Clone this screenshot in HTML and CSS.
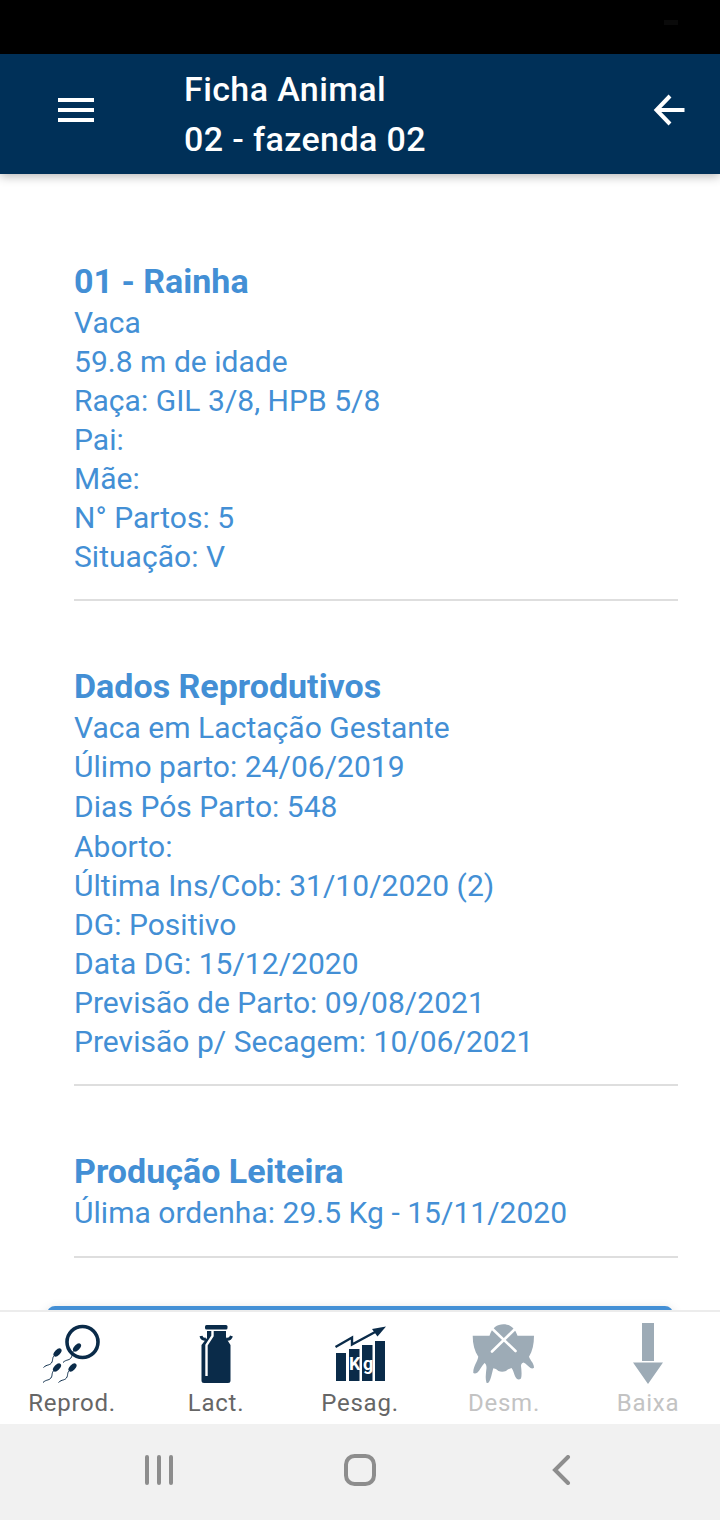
FILE: index.html
```
<!DOCTYPE html>
<html lang="pt-BR">
  <head>
    <title>Ficha Animal</title>
    <meta charset="UTF-8">
    <meta name="viewport" content="width=device-width, initial-scale=1.0">
    <link rel="stylesheet" href="styles.css">
  </head>
  <body>
    <div class="status-bar"><span class="camera"></span></div>

    <header class="toolbar">
      <svg class="menu" width="36" height="24" viewBox="0 0 36 24" fill="#fff">
        <rect width="36" height="4"/>
        <rect y="10" width="36" height="4"/>
        <rect y="20" width="36" height="4"/>
      </svg>
      <h1>Ficha Animal<br>02 - fazenda 02</h1>
      <svg class="back" width="32" height="32" viewBox="0 0 32 32" fill="none" stroke="#fff" stroke-width="4">
        <path d="M17 2 3.500 16 17 30"/>
        <path d="M4 16H31.500"/>
      </svg>
    </header>

    <main class="content">
      <section>
        <h2>01 - Rainha</h2>
        <p>Vaca</p>
        <p>59.8 m de idade</p>
        <p>Raça: GIL 3/8, HPB 5/8</p>
        <p>Pai:</p>
        <p>Mãe:</p>
        <p>N° Partos: 5</p>
        <p>Situação: V</p>
      </section>
      <section>
        <h2>Dados Reprodutivos</h2>
        <p>Vaca em Lactação Gestante</p>
        <p class="tall">Úlimo parto: 24/06/2019</p>
        <p class="tall">Dias Pós Parto: 548</p>
        <p>Aborto:</p>
        <p>Última Ins/Cob: 31/10/2020 (2)</p>
        <p>DG: Positivo</p>
        <p>Data DG: 15/12/2020</p>
        <p>Previsão de Parto: 09/08/2021</p>
        <p>Previsão p/ Secagem: 10/06/2021</p>
      </section>
      <section class="milk">
        <h2>Produção Leiteira</h2>
        <p>Úlima ordenha: 29.5 Kg - 15/11/2020</p>
      </section>
      <div class="card"></div>
    </main>

    <nav class="tabs">
      <a class="tab">
        <svg width="64" height="64" viewBox="0 0 64 64" fill="#0a2b49" stroke="#0a2b49">
          <circle cx="42.500" cy="22" r="15.500" fill="none" stroke-width="3.600"/>
          <g id="cell">
            <ellipse cx="17.500" cy="32.500" rx="5" ry="2.700" transform="rotate(-45 17.500 32.500)" stroke="none"/>
            <path d="M15 35C12 37 13 40 12 42C10 46 7 44 3.500 47.500" fill="none" stroke-width="1"/>
          </g>
          <use href="#cell" x="19.500" y="-5"/>
          <use href="#cell" x="-.5" y="15"/>
          <use href="#cell" x="15" y="15"/>
        </svg>
        <span>Reprod.</span>
      </a>
      <a class="tab">
        <svg width="64" height="64" viewBox="0 0 64 64" fill="#0a2b49">
          <rect x="21" y="5" width="22.500" height="4.500" rx="1.500"/>
          <path d="M23 11H42V18L46.500 25V60.500Q46.500 63 44 63H20Q17.500 63 17.500 60.500V25L23 18Z"/>
          <path d="M17 16Q18 20 22 19M47.500 16Q46 20 42 19" fill="none" stroke="#0a2b49" stroke-width="3"/>
          <path d="M28.500 11V16L22.500 25V56" fill="none" stroke="#fff" stroke-width="2.400"/>
        </svg>
        <span>Lact.</span>
      </a>
      <a class="tab">
        <svg width="64" height="64" viewBox="0 0 64 64" fill="#0a2b49">
          <path d="M8 33H18V61H8ZM21 29H31.500V61H21ZM34 25H44.500V61H34ZM47 21H57V61H47Z"/>
          <path d="M7.500 27 24 17.500V24.500L49 11" fill="none" stroke="#0a2b49" stroke-width="2.400"/>
          <path d="M58 6.500 44 9 49.500 16.500Z"/>
          <text class="kg" x="21" y="49.500">K</text>
          <text class="kg" x="35" y="49.500">g</text>
        </svg>
        <span>Pesag.</span>
      </a>
      <a class="tab off">
        <svg width="64" height="64" viewBox="0 0 64 64" fill="#9dabb6">
          <path d="M.7 15.700H17.500C20 8 25 4.300 31.500 4.300S43 8 45.500 15.700H62C62 24 60.500 31 57 36.700C58.500 41 62 43 62 47.700Q60.500 49 58.500 48C56 46 54 43.500 51.500 42.500Q49 43 49 46C49.500 50 50 55 49 58.500Q47 60 45 59C42 56 42 51 39.500 48Q36 49 34 51Q30 52.500 26.500 51Q24 48.500 21.300 48.300C20 53 19 59 17 62Q16 63.500 14.500 62.700C13 58 14 53 14.500 48Q14.500 44 12.500 43C9.500 46 8 50 5.500 52.500Q3 54 1.300 53C1 46 5.500 42 6.300 36.700C2.500 31 .7 24 .7 15.700Z"/>
          <path d="M20 31.500 43 9M20 8.500 43.500 31" stroke="#fff" stroke-width="2.600" stroke-linecap="round"/>
        </svg>
        <span>Desm.</span>
      </a>
      <a class="tab off">
        <svg width="64" height="64" viewBox="0 0 64 64" fill="#9dabb6">
          <path d="M26 3H38V41H26ZM17 42.500H47L32 64Z"/>
        </svg>
        <span>Baixa</span>
      </a>
    </nav>

    <footer class="nav-keys">
      <svg width="30" height="30" viewBox="0 0 30 30" stroke="#8d8d8d" stroke-width="4" stroke-linecap="round">
        <path d="M3 2V28M15 2V28M27 2V28"/>
      </svg>
      <svg width="32" height="32" viewBox="0 0 32 32" fill="none" stroke="#8d8d8d" stroke-width="4">
        <rect x="2" y="2" width="28" height="28" rx="8.500"/>
      </svg>
      <svg width="30" height="30" viewBox="0 0 30 30" fill="none" stroke="#8d8d8d" stroke-width="4" stroke-linecap="round">
        <path d="M22 2 9 15 22 28"/>
      </svg>
    </footer>
  </body>
</html>
```

FILE: styles.css
```
*{
  box-sizing: border-box;
  margin: 0;
  padding: 0;
}

body{
  display: flex;
  flex-direction: column;
  height: 1520px;
  overflow: hidden;
  background: #fff;
  font-family: Roboto, sans-serif;
}

.status-bar{
  display: flex;
  justify-content: flex-end;
  flex: none;
  height: 54px;
  padding: 20px 42px 0 0;
  background: #000;
}

.camera{
  width: 14px;
  height: 5px;
  background: #0a0a0a;
}

.toolbar{
  position: relative;
  z-index: 1;
  display: flex;
  align-items: center;
  flex: none;
  height: 120px;
  padding: 0 35px 0 58px;
  background: #003058;
  box-shadow: 0 2px 10px rgba(0, 0, 0, .3);
}

.toolbar svg{
  margin-bottom: 8px;
}

.toolbar h1{
  flex: 1;
  margin-left: 90px;
  color: #fff;
  font-size: 34px;
  font-weight: 500;
  line-height: 50px;
  letter-spacing: .4px;
}

.content{
  flex: 1;
  min-height: 0;
  overflow: hidden;
  padding: 86px 42px 0 74px;
  color: #438fd5;
}

.content section{
  margin-bottom: 64px;
  padding-bottom: 23px;
  border-bottom: 2px solid #dedede;
}

.content .milk{
  margin-bottom: 48px;
  padding-bottom: 24px;
}

.content h2{
  font-size: 34px;
  font-weight: 700;
  line-height: 43px;
}

.content p{
  font-size: 30px;
  line-height: 39px;
  letter-spacing: .03px;
}

.content .tall{
  line-height: 40px;
}

.card{
  width: 626px;
  height: 80px;
  margin-left: -27px;
  border-radius: 8px;
  background: #438fd5;
  box-shadow: 0 4px 12px rgba(0, 0, 0, .2);
}

.tabs{
  display: flex;
  flex: none;
  height: 114px;
  border-top: 2px solid #ececec;
}

.tab{
  display: flex;
  flex: 1;
  flex-direction: column;
  align-items: center;
  padding-top: 8px;
  color: #666;
  font-size: 24px;
  line-height: 38px;
  letter-spacing: .75px;
}

.off{
  color: #c3c3c3;
}

.kg{
  fill: #fff;
  font-size: 18px;
  font-weight: 700;
  letter-spacing: 0;
}

.nav-keys{
  display: flex;
  justify-content: space-between;
  align-items: center;
  flex: none;
  height: 96px;
  padding: 0 144px 4px 144px;
  background: #f1f1f1;
}
```
